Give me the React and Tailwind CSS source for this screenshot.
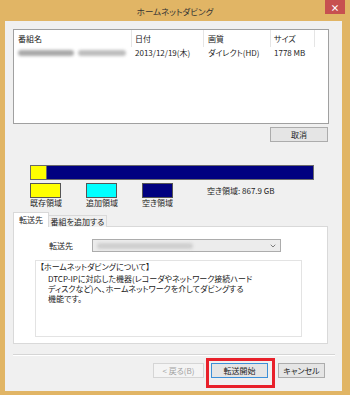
import React from 'react';
import { ChevronDown } from 'lucide-react';

const Blur = ({ w, c = 'bg-[#b5b5b5]' }) => (
    <div className={`h-[6px] rounded-full blur-[1.5px] ${c}`} style={{ width: w }} />
);

const App = () => {
    return (
        <div className="w-[350px] h-[395px] bg-[#e1b565] flex flex-col overflow-hidden font-['Noto_Sans_CJK_JP',sans-serif] text-[8px] text-[#1e1e1e] [font-feature-settings:'palt']">
            {/* title bar */}
            <div className="h-[21px] flex items-start">
                <div className="w-[25px]" />
                <div className="flex-1 h-[21px] flex items-center justify-center pt-[2px] text-[8.5px] text-[#333]">
                    ホームネットダビング
                </div>
                <div className="w-[20px] h-[14px] mr-[5px] bg-[#c75050] flex items-center justify-center text-white text-[9px] font-bold leading-none">
                    ×
                </div>
            </div>

            {/* client area */}
            <div className="ml-[5px] w-[337px] h-[370px] bg-[#f0f0f0] flex flex-col pl-[8px]">
                {/* list view */}
                <div className="mt-[8px] w-[316px] h-[95px] border border-[#a0a0a0] bg-white flex flex-col">
                    <div className="h-[17px] flex leading-[17px] text-[#222]">
                        <div className="w-[118px] pl-[4px] border-r border-[#e5e5e5]">番組名</div>
                        <div className="w-[72px] pl-[3px] border-r border-[#e5e5e5]">日付</div>
                        <div className="w-[67px] pl-[4px] border-r border-[#e5e5e5]">画質</div>
                        <div className="w-[44px] pl-[3px] border-r border-[#e5e5e5]">サイズ</div>
                    </div>
                    <div className="h-[11px] flex items-center leading-[11px]">
                        <div className="w-[118px] pl-[4px] flex items-center gap-[4px]">
                            <Blur w={56} c="bg-[#a9a9a9]" />
                            <Blur w={48} c="bg-[#bdbdbd]" />
                        </div>
                        <div className="w-[72px] pl-[3px] whitespace-nowrap">2013/12/19(木)</div>
                        <div className="w-[67px] pl-[4px] whitespace-nowrap">ダイレクト(HD)</div>
                        <div className="w-[44px] pl-[3px] whitespace-nowrap">1778 MB</div>
                    </div>
                </div>

                <button className="mt-[3px] ml-[257px] w-[58px] h-[15px] border border-[#acacac] bg-[#e5e5e5] flex items-center justify-center leading-none">
                    取消
                </button>

                {/* capacity bar */}
                <div className="mt-[23px] ml-[17px] w-[284px] h-[15px] border border-[#6a6a6a] bg-[#000080] flex">
                    <div className="w-[16px] h-full bg-[#ffff00] border-r border-[#6a6a6a]" />
                </div>

                {/* legend */}
                <div className="mt-[3px] ml-[17px] flex items-start">
                    <div className="w-[31px] flex flex-col">
                        <div className="h-[15px] border border-[#555] bg-[#ffff00]" />
                        <span className="leading-[10px] whitespace-nowrap">既存領域</span>
                    </div>
                    <div className="ml-[25px] w-[31px] flex flex-col">
                        <div className="h-[15px] border border-[#555] bg-[#00ffff]" />
                        <span className="leading-[10px] whitespace-nowrap">追加領域</span>
                    </div>
                    <div className="ml-[25px] w-[31px] flex flex-col">
                        <div className="h-[15px] border border-[#555] bg-[#000080]" />
                        <span className="leading-[10px] whitespace-nowrap">空き領域</span>
                    </div>
                    <div className="ml-[34px] h-[16px] flex items-center whitespace-nowrap">空き領域: 867.9 GB</div>
                </div>

                {/* tabs */}
                <div className="mt-[4px] w-[315px] flex flex-col">
                    <div className="h-[15px] -mb-px flex items-end relative z-10">
                        <div className="w-[36px] h-[15px] bg-white border border-b-0 border-[#d9d9d9] flex items-center justify-center leading-none">
                            転送先
                        </div>
                        <div className="w-[58px] h-[12px] bg-[#f0f0f0] border border-l-0 border-b-0 border-[#d9d9d9] flex items-center justify-center leading-none">
                            番組を追加する
                        </div>
                    </div>
                    <div className="h-[118px] border border-[#d9d9d9] bg-white flex flex-col">
                        <div className="mt-[12px] pl-[35px] h-[13px] flex items-center">
                            <span className="w-[43px] leading-none">転送先</span>
                            <div className="w-[189px] h-[13px] border border-[#acacac] bg-[#ececec] flex items-center pl-[4px] pr-[3px]">
                                <Blur w={96} c="bg-[#cfcfcf]" />
                                <ChevronDown className="ml-auto w-[8px] h-[8px] text-[#444]" strokeWidth={2} />
                            </div>
                        </div>
                        <div className="mt-[8px] ml-[21px] w-[267px] h-[77px] border border-[#e3e3e3] bg-white pt-[1px] pl-[4px] leading-[10px] text-[#222]">
                            <div className="mb-[2px]">【ホームネットダビングについて】</div>
                            <div className="pl-[8px]">
                                <div>DTCP-IPに対応した機器(レコーダやネットワーク接続ハード</div>
                                <div>ディスクなど)へ、ホームネットワークを介してダビングする</div>
                                <div>機能です。</div>
                            </div>
                        </div>
                    </div>
                </div>

                {/* separator */}
                <div className="mt-[10px] w-[322px] h-[2px] border-t border-b border-t-[#d5d5d5] border-b-white" />

                {/* footer buttons */}
                <div className="mt-[7px] ml-[140px] flex items-center">
                    <button className="w-[51px] h-[15px] border border-[#d5d5d5] bg-[#f4f4f4] text-[#a3a3a3] flex items-center justify-center leading-none">
                        &lt; 戻る(B)
                    </button>
                    <div className="relative ml-[7px]">
                        <button className="w-[57px] h-[15px] border border-[#3c8fd8] bg-[#e5e5e5] flex items-center justify-center leading-none">
                            転送開始
                        </button>
                        <div className="absolute -left-[5px] -top-[5px] -right-[7px] -bottom-[10px] border-[3px] border-[#e8202a]" />
                    </div>
                    <button className="ml-[10px] w-[47px] h-[15px] border border-[#acacac] bg-[#e5e5e5] flex items-center justify-center leading-none">
                        キャンセル
                    </button>
                </div>
            </div>
        </div>
    );
};

export default App;
